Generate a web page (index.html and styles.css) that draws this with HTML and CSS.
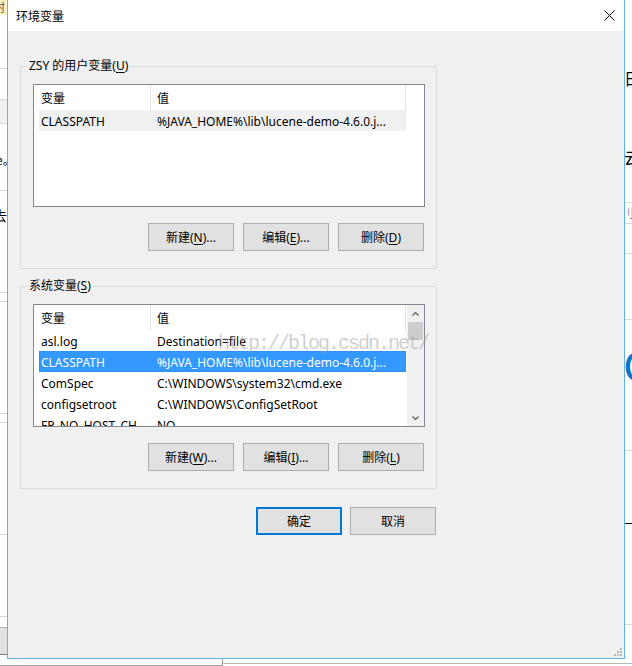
FILE: index.html
```html
<!DOCTYPE html>
<html lang="zh-CN">
<head>
<meta charset="utf-8">
<title>环境变量</title>
<link rel="stylesheet" href="styles.css">
</head>
<body>
<div class="screen">
  <div class="top">
    <div class="strip strip-left">
      <div class="ls-a"><span class="frag frag-a">附</span></div>
      <div class="ls-b"></div>
      <div class="ls-c"></div>
      <div class="ls-d"></div>
      <div class="ls-e"><span class="frag frag-e">e。</span></div>
      <div class="ls-f"><span class="frag frag-f">去</span></div>
      <div class="ls-g"></div>
      <div class="ls-h"></div>
      <div class="ls-g"></div>
      <div class="ls-h"></div>
      <div class="ls-k"></div>
      <div class="ls-l"></div>
      <div class="ls-m"></div>
    </div>

    <div class="dialog">
      <div class="titlebar">
        <span class="title">环境变量</span>
        <svg class="close" width="11" height="11" viewBox="0 0 11 11"><path d="M0.5 0.5 L10.5 10.5 M10.5 0.5 L0.5 10.5" stroke="#000" stroke-width="1" fill="none"/></svg>
      </div>
      <div class="dlg-body">
        <fieldset class="group">
          <legend>ZSY 的用户变量(<u>U</u>)</legend>
          <div class="listbox">
            <div class="lv">
              <div class="lv-head"><div class="hc">变量</div><div class="hc">值</div></div>
              <div class="lv-row sel-inactive"><span class="c1">CLASSPATH</span><span class="c2">%JAVA_HOME%\lib\lucene-demo-4.6.0.j...</span></div>
            </div>
          </div>
          <div class="btnrow">
            <button class="btn">新建(<u>N</u>)...</button>
            <button class="btn">编辑(<u>E</u>)...</button>
            <button class="btn">删除(<u>D</u>)</button>
          </div>
        </fieldset>

        <fieldset class="group group-sys">
          <legend>系统变量(<u>S</u>)</legend>
          <div class="listbox">
            <div class="lv">
              <div class="lv-head"><div class="hc">变量</div><div class="hc">值</div></div>
              <div class="lv-row"><span class="c1">asl.log</span><span class="c2">Destination=file</span></div>
              <div class="lv-row sel"><span class="c1">CLASSPATH</span><span class="c2">%JAVA_HOME%\lib\lucene-demo-4.6.0.j...</span></div>
              <div class="lv-row"><span class="c1">ComSpec</span><span class="c2">C:\WINDOWS\system32\cmd.exe</span></div>
              <div class="lv-row"><span class="c1">configsetroot</span><span class="c2">C:\WINDOWS\ConfigSetRoot</span></div>
              <div class="lv-row"><span class="c1">FP_NO_HOST_CH...</span><span class="c2">NO</span></div>
            </div>
            <div class="vscroll">
              <div class="sb-btn"><svg width="7" height="4" viewBox="0 0 7 4"><path d="M0.5 3.5 L3.5 0.5 L6.5 3.5" fill="none" stroke="#606060" stroke-width="1.2"/></svg></div>
              <div class="sb-track"><div class="sb-thumb"></div></div>
              <div class="sb-btn"><svg width="7" height="4" viewBox="0 0 7 4"><path d="M0.5 0.5 L3.5 3.5 L6.5 0.5" fill="none" stroke="#606060" stroke-width="1.2"/></svg></div>
            </div>
          </div>
          <div class="btnrow">
            <button class="btn">新建(<u>W</u>)...</button>
            <button class="btn">编辑(<u>I</u>)...</button>
            <button class="btn">删除(<u>L</u>)</button>
          </div>
        </fieldset>

        <div class="dlg-buttons">
          <button class="btn btn-default">确定</button>
          <button class="btn">取消</button>
        </div>
      </div>
      <svg class="grip" width="10" height="10" viewBox="0 0 10 10">
        <rect x="8" y="2" width="2" height="2" fill="#b8b8b8"/>
        <rect x="5" y="5" width="2" height="2" fill="#b8b8b8"/>
        <rect x="8" y="5" width="2" height="2" fill="#b8b8b8"/>
        <rect x="2" y="8" width="2" height="2" fill="#b8b8b8"/>
        <rect x="5" y="8" width="2" height="2" fill="#b8b8b8"/>
        <rect x="8" y="8" width="2" height="2" fill="#b8b8b8"/>
      </svg>
    </div>

    <div class="strip strip-right">
      <div class="rs-a"></div>
      <div class="rs-b"><span class="frag frag-rb">日</span></div>
      <div class="rs-c"><span class="frag frag-rc">云</span></div>
      <div class="rs-d"><span class="frag frag-rd">刂</span></div>
      <div class="rs-e"></div>
      <div class="rs-f"></div>
      <div class="rs-g"></div>
      <div class="rs-h"><span class="frag frag-rh">C</span></div>
      <div class="rs-i"></div>
      <div class="rs-j"><span class="frag frag-rj">◤</span></div>
      <div class="rs-k"></div>
    </div>
  </div>
  <div class="bottom">
    <div class="bs-left"></div>
    <div class="bs-right"></div>
  </div>
  <div class="watermark">http://blog.csdn.net/</div>
</div>
</body>
</html>
```

FILE: styles.css
```css
* { box-sizing: border-box; }
html, body { margin: 0; padding: 0; }
body {
  width: 632px;
  height: 666px;
  overflow: hidden;
  background: #fff;
  font-family: "Noto Sans", "Noto Sans CJK SC", sans-serif;
  font-size: 12px;
  color: #000;
}
u { text-decoration: underline; text-underline-offset: 2px; }

.screen { position: relative; width: 632px; height: 666px; }
.top { display: flex; height: 659px; }

/* background strips (other windows behind the dialog) */
.strip { width: 7px; flex: none; display: flex; flex-direction: column; overflow: hidden; background: #fff; }
.frag { display: block; white-space: nowrap; font-family: "Noto Sans CJK SC", sans-serif; }

.ls-a { height: 15px; background: #fbf2c4; overflow: hidden; }
.frag-a { margin-left: -7px; font-size: 12px; line-height: 13px; color: #555; }
.ls-b { height: 54px; border-bottom: 1px solid #d9d9d9; }
.ls-c { height: 31px; border-bottom: 1px solid #d9d9d9; }
.ls-d { height: 24px; background: #efefef; border-bottom: 1px solid #d9d9d9; }
.ls-e { height: 67px; border-bottom: 1px solid #d9d9d9; padding-top: 29px; overflow: hidden; }
.frag-e { margin-left: -4px; font-size: 12px; line-height: 14px; }
.ls-f { height: 102px; border-bottom: 1px solid #d9d9d9; padding-top: 16px; overflow: hidden; }
.frag-f { margin-left: -7px; font-size: 14px; line-height: 16px; }
.ls-g { height: 9px; border-bottom: 1px solid #d9d9d9; }
.ls-h { height: 112px; border-bottom: 1px solid #d9d9d9; }
.ls-k { height: 82px; border-bottom: 1px solid #d9d9d9; }
.ls-l { height: 10px; }
.ls-m { height: 28px; background: #e1e1e1; border-top: 1px solid #adadad; border-bottom: 1px solid #7a7a7a; }

.rs-a { height: 68px; }
.rs-b { height: 135px; border-bottom: 1px solid #d9d9d9; overflow: hidden; }
.frag-rb { font-size: 16px; line-height: 20px; margin-left: -1px; }
.rs-c { height: 0; }
.frag-rc { font-size: 16px; line-height: 18px; margin-top: -55px; margin-left: -1px; }
.rs-d { height: 21px; border-bottom: 1px solid #d9d9d9; padding-top: 3px; overflow: hidden; }
.frag-rd { font-size: 12px; line-height: 13px; color: #888; margin-left: -3px; }
.rs-e { height: 30px; border-bottom: 1px solid #d9d9d9; }
.rs-f { height: 66px; border-bottom: 1px solid #d9d9d9; }
.rs-g { height: 25px; }
.rs-h { height: 40px; overflow: hidden; }
.frag-rh { font-family: "Noto Sans", sans-serif; font-size: 44px; line-height: 40px; color: #0a74c9; margin-left: -2px; }
.rs-i { height: 66px; border-bottom: 1px solid #d9d9d9; }
.rs-j { height: 73px; padding-top: 72px; overflow: hidden; }
.frag-rj { font-size: 10px; line-height: 10px; }
.rs-k { height: 101px; border-bottom: 1px solid #d9d9d9; }

.bottom { display: flex; height: 7px; }
.bs-left { width: 223px; height: 7px; border-right: 1px solid #a0a0a0; border-bottom: 1px solid #a0a0a0; }
.bs-right { flex: 1; height: 5px; border-bottom: 1px solid #b8b8b8; }

/* dialog window */
.dialog {
  position: relative;
  width: 618px;
  height: 659px;
  flex: none;
  border: 1px solid #5fb3e6;
  border-top: none;
  background: #f0f0f0;
  display: flex;
  flex-direction: column;
}
.titlebar {
  height: 31px;
  flex: none;
  background: #fff;
  display: flex;
  align-items: center;
  justify-content: space-between;
  padding: 0 9px 0 8px;
}
.title { font-family: "Noto Sans CJK SC", sans-serif; font-size: 12px; line-height: 16px; }
.close { display: block; }

.dlg-body {
  padding: 27px 0 0 12px;
  display: flex;
  flex-direction: column;
  align-items: flex-start;
}

.group {
  width: 417px;
  min-width: 0;
  margin: 0;
  padding: 10px 11px 17px 12px;
  border: 1px solid #dcdcdc;
}
.group-sys { margin-top: 9px; }
.group legend {
  padding: 0 2px;
  margin-left: -6px;
  line-height: 16px;
}

.listbox {
  height: 123px;
  border: 1px solid #828790;
  background: #fff;
  display: flex;
  overflow: hidden;
}
.lv { flex: 1; min-width: 0; overflow: hidden; }
.lv-head {
  display: grid;
  grid-template-columns: 117px 255px;
  height: 25px;
}
.hc {
  border-right: 1px solid #e5e5e5;
  padding-left: 7px;
  padding-top: 1px;
  line-height: 25px;
}
.hc + .hc { padding-left: 6px; }

.lv-row {
  display: grid;
  grid-template-columns: 112px 255px;
  width: 367px;
  height: 21px;
  margin-left: 5px;
  padding-top: 1px;
  line-height: 21px;
  white-space: nowrap;
  overflow: hidden;
}
.lv-row .c1 { padding-left: 2px; overflow: hidden; }
.lv-row .c2 { padding-left: 6px; overflow: hidden; }
.sel-inactive { background: #f0f0f0; }
.sel { background: #3399ff; color: #fff; outline: 1px dotted #cc6600; outline-offset: -1px; }

.vscroll {
  width: 17px;
  flex: none;
  background: #f0f0f0;
  display: flex;
  flex-direction: column;
}
.sb-btn { height: 17px; display: flex; align-items: center; justify-content: center; }
.sb-btn svg { display: block; }
.sb-track { flex: 1; }
.sb-thumb { width: 15px; height: 18px; margin: 0 auto; background: #cdcdcd; }

.btnrow {
  display: flex;
  justify-content: flex-end;
  gap: 9px;
  margin-top: 16px;
  padding-right: 1px;
}
.btn {
  width: 86px;
  height: 28px;
  padding: 2px 0 0;
  border: 1px solid #adadad;
  background: #e1e1e1;
  font: inherit;
  color: #000;
  line-height: 16px;
  display: flex;
  align-items: center;
  justify-content: center;
}
.btn-default { border: 2px solid #0078d7; }

.dlg-buttons {
  width: 417px;
  display: flex;
  justify-content: flex-end;
  gap: 8px;
  margin-top: 18px;
  padding-right: 1px;
}

.grip { position: absolute; right: 2px; bottom: 2px; display: block; }

.watermark {
  position: absolute;
  left: 218px;
  top: 334px;
  font-family: "Liberation Mono", monospace;
  font-size: 20px;
  line-height: 20px;
  letter-spacing: -2px;
  color: rgba(160, 160, 160, 0.5);
  white-space: nowrap;
  pointer-events: none;
}
```
